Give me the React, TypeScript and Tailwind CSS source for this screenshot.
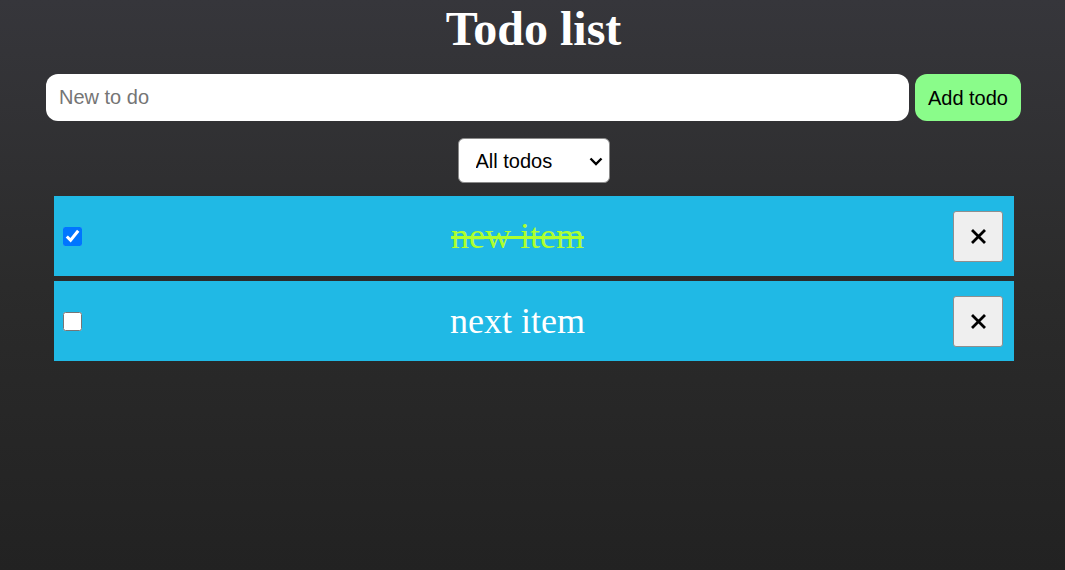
import React, { useState } from "react";

type Todo = { id: number; text: string; done: boolean };

export default function App() {
  const [todos, setTodos] = useState<Todo[]>([
    { id: 1, text: "new item", done: true },
    { id: 2, text: "next item", done: false },
  ]);
  const [value, setValue] = useState("");

  return (
    <div className="min-h-screen bg-gradient-to-b from-[#36363b] via-[#2b2b2b] to-[#222222] pl-[46px] pr-[44px] pt-[2px] font-['Liberation_Sans',Arial,sans-serif]">
      <h1 className="text-center text-[48px] font-bold leading-[54px] text-white font-['Liberation_Serif','Times_New_Roman',serif]">
        Todo list
      </h1>
      <div className="mt-[18px] flex gap-[6px]">
        <input
          value={value}
          onChange={(e) => setValue(e.target.value)}
          placeholder="New to do"
          className="h-[47px] flex-1 rounded-[12px] bg-white px-[13px] text-[20px] text-black outline-none placeholder:text-[#757575]"
        />
        <button className="h-[47px] rounded-[12px] bg-[#8afc8a] px-[13px] text-[20px] text-black">
          Add todo
        </button>
      </div>
      <div className="mt-[17px] flex justify-center">
        <div className="relative">
          <select className="block h-[45px] w-[152px] appearance-none rounded-[6px] border border-[#8a8a8a] bg-white pl-[17px] pr-[30px] text-[20px] text-black">
            <option>All todos</option>
            <option>Active</option>
            <option>Completed</option>
          </select>
          <svg
            className="pointer-events-none absolute right-[7px] top-[19px]"
            width="14"
            height="9"
            viewBox="0 0 14 9"
          >
            <path d="M1.5 1.5 L7 7 L12.5 1.5" fill="none" stroke="#000" strokeWidth="2.4" />
          </svg>
        </div>
      </div>
      <div className="mt-[13px] ml-[8px] mr-[7px] flex flex-col gap-[5px]">
        {todos.map((t) => (
          <div key={t.id} className="flex h-[80px] items-center bg-[#20b9e5] pl-[9px] pr-[11px]">
            <input
              type="checkbox"
              checked={t.done}
              onChange={() =>
                setTodos(todos.map((x) => (x.id === t.id ? { ...x, done: !x.done } : x)))
              }
              className="m-0 h-[19px] w-[19px] accent-[#0075ff]"
            />
            <div
              className={
                "flex-1 text-center text-[36px] font-['Liberation_Serif','Times_New_Roman',serif] " +
                (t.done ? "text-[#adff2f] line-through" : "text-white")
              }
            >
              {t.text}
            </div>
            <button className="flex h-[51px] w-[50px] items-center justify-center rounded-[3px] border border-[#8f8f8f] bg-[#efefef]">
              <svg width="15" height="15" viewBox="0 0 15 15">
                <path d="M2 2 L13 13 M13 2 L2 13" stroke="#000" strokeWidth="2.8" strokeLinecap="square" />
              </svg>
            </button>
          </div>
        ))}
      </div>
    </div>
  );
}
